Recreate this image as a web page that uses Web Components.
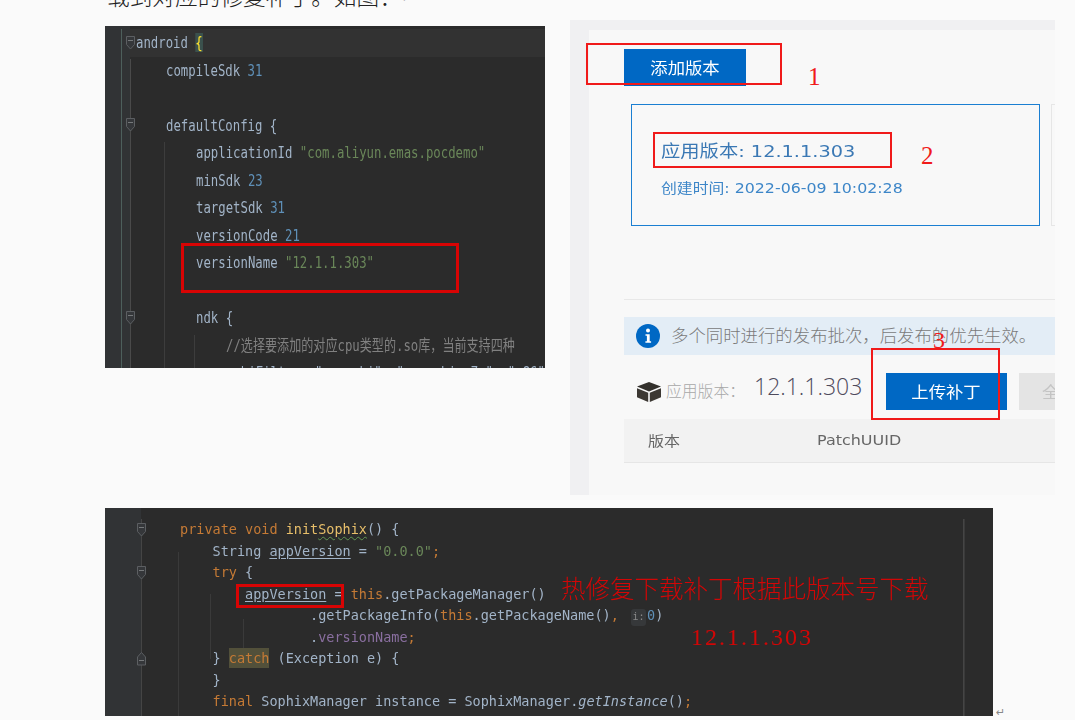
<!DOCTYPE html>
<html lang="zh">
<head>
<meta charset="utf-8">
<title>热修复</title>
<style>
  html, body { margin: 0; background: #fafafa; overflow: hidden; height: 720px; }
</style>
</head>
<body>
<doc-page>
  <span slot="intro">载到对应的修复补丁。如图&#xFF1A;</span>
  <code-panel slot="left" variant="gradle">
    <mark-box x="76" y="217" w="278" h="50"></mark-box>
  </code-panel>
  <console-panel slot="right"></console-panel>
  <code-panel slot="bottom" variant="java">
    <mark-box x="131" y="76" w="108" h="24"></mark-box>
    <note-text x="456" y="66" size="24.5" cjk>热修复下载补丁根据此版本号下载</note-text>
    <note-text x="586" y="115" size="24" wide>12.1.1.303</note-text>
  </code-panel>
</doc-page>

<script>
const GRADLE_LINES = [
  { indent: 0, fold: 'down', active: true, html: '<i class="id">android</i> <b class="match">{</b>' },
  { indent: 1, html: '<i class="id">compileSdk</i> <i class="num">31</i>' },
  { indent: 0, html: '' },
  { indent: 1, fold: 'down', html: '<i class="id">defaultConfig {</i>' },
  { indent: 2, html: '<i class="id">applicationId</i> <i class="str">"com.aliyun.emas.pocdemo"</i>' },
  { indent: 2, html: '<i class="id">minSdk</i> <i class="num">23</i>' },
  { indent: 2, html: '<i class="id">targetSdk</i> <i class="num">31</i>' },
  { indent: 2, html: '<i class="id">versionCode</i> <i class="num">21</i>' },
  { indent: 2, html: '<i class="id">versionName</i> <i class="str">"12.1.1.303"</i>' },
  { indent: 0, html: '' },
  { indent: 2, fold: 'down', html: '<i class="id">ndk {</i>' },
  { indent: 3, html: '<i class="com">//<span class="han">选择要添加的对应</span>cpu<span class="han">类型的</span>.so<span class="han">库&#xFF0C;当前支持四种</span></i>' },
  { indent: 3, html: '<i class="id">&nbsp;abiFilters "armeabi", "armeabi-v7a", "x86"</i>' }
];

const JAVA_LINES = [
  { indent: 0, fold: 'down', html: '<i class="kw">private void</i> <i class="fn">init<u class="wavy">Sophix</u></i><i class="id">() {</i>' },
  { indent: 1, html: '<i class="id">String <u>appVersion</u> = </i><i class="str">"0.0.0"</i><i class="kw">;</i>' },
  { indent: 1, fold: 'down', html: '<i class="kw">try</i> <i class="id">{</i>' },
  { indent: 2, html: '<i class="id"><u>appVersion</u> = </i><i class="kw">this</i><i class="id">.getPackageManager()</i>' },
  { indent: 4, html: '<i class="id">.getPackageInfo(</i><i class="kw">this</i><i class="id">.getPackageName()</i><i class="kw">,</i> <span class="hint">i:</span><i class="num">0</i><i class="id">)</i>' },
  { indent: 4, html: '<i class="id">.</i><i class="field">versionName</i><i class="kw">;</i>' },
  { indent: 1, fold: 'up', html: '<i class="id">}</i> <i class="kw catch">catch</i> <i class="id">(Exception e) {</i>' },
  { indent: 1, html: '<i class="id">}</i>' },
  { indent: 1, html: '<i class="kw">final</i> <i class="id">SophixManager instance = SophixManager.</i><em class="id">getInstance</em><i class="id">()</i><i class="kw">;</i>' }
];

const EDITORS = {
  gradle: {
    lines: GRADLE_LINES, width: 440, height: 342, gutter: 25, pad: 31, tab: 30, lineHeight: 27.5, top: 3,
    font: 16, squeeze: 0.77, foldX: 21, markWidth: 3,
    guides: [[16, 0, 342, '#4d5f5c'], [25, 30, 312, '#4a4a4a'], [59, 113, 229, '#3d3d3d'], [89, 306, 36, '#3d3d3d']]
  },
  java: {
    lines: JAVA_LINES, width: 888, height: 208, gutter: 36, pad: 75, tab: 32.5, lineHeight: 21.5, top: 11,
    font: 13.5, squeeze: 1, foldX: 32, markWidth: 3,
    guides: [[36, 0, 208, '#454545'], [73, 33, 175, '#3a3a3a'], [105, 75, 65, '#3a3a3a'], [138, 100, 40, '#3a3a3a'], [858, 0, 208, '#454545'], [859, 0, 208, '#3a3a3a']]
  }
};

class DocPage extends HTMLElement {
  constructor() {
    super();
    this.attachShadow({ mode: 'open' });
    this.shadowRoot.innerHTML = `
      <style>
        :host { display: block; padding-left: 105px; width: 1075px; box-sizing: border-box; }
        .intro {
          display: flex; align-items: center; height: 24px; margin-top: -16px; padding-left: 2px;
          font: 300 22.7px/24px "Noto Sans CJK SC", sans-serif; color: #222; white-space: nowrap;
        }
        .ret { color: #aaa; font: 11px "DejaVu Sans", sans-serif; margin-top: 4px; }
        .row { display: flex; align-items: flex-start; gap: 25px; margin-top: 12px; }
        .left { display: block; margin-top: 6px; }
        .bottom { display: flex; align-items: flex-end; margin-top: 13px; }
        .end { color: #888; font: 11px "DejaVu Sans", sans-serif; margin: 0 0 -3px 3px; }
      </style>
      <div class="intro"><slot name="intro"></slot><span class="ret">↵</span></div>
      <div class="row">
        <div class="left"><slot name="left"></slot></div>
        <slot name="right"></slot>
      </div>
      <div class="bottom"><slot name="bottom"></slot><span class="end">↵</span></div>
    `;
  }
}

class CodePanel extends HTMLElement {
  constructor() {
    super();
    this.attachShadow({ mode: 'open' });
  }

  connectedCallback() {
    const cfg = EDITORS[this.getAttribute('variant')];
    this.shadowRoot.innerHTML = `
      <style>
        :host {
          display: block; position: relative; overflow: hidden; box-sizing: border-box; flex: none;
          width: ${cfg.width}px; height: ${cfg.height}px; padding-top: ${cfg.top}px;
          background: linear-gradient(90deg, #313335 ${cfg.gutter}px, #2b2b2b ${cfg.gutter}px);
          font: ${cfg.font}px/${cfg.lineHeight}px "DejaVu Sans Mono", "Noto Sans CJK SC", monospace;
          --mark-width: ${cfg.markWidth}px;
        }
        .code { filter: blur(.3px); }
        .line { position: relative; height: ${cfg.lineHeight}px; white-space: pre; }
        .line.active { background: linear-gradient(90deg, transparent 25px, #323232 25px); }
        .text { display: inline-block; transform: scaleX(${cfg.squeeze}); transform-origin: 0 50%; }
        .guide { position: absolute; width: 1px; }
        .fold { position: absolute; left: ${cfg.foldX}px; top: 50%; margin-top: -7px; }
        i, em { font-style: normal; }
        em { font-style: italic; }
        b { font-weight: 400; }
        .id { color: #a2b4c8; }
        .num { color: #5f90b8; }
        .str { color: #6a8759; }
        .kw { color: #c57a35; }
        .fn { color: #e8bf6a; }
        .field { color: #8a6fa0; }
        .com { color: #808080; }
        .han { font-size: 15.7px; }
        .match { color: #ffe22e; background: #3b514d; }
        .catch { background: #52503a; padding: 2px 0; }
        u { text-underline-offset: 2px; }
        .wavy { text-decoration: underline wavy #619654 1px; }
        .hint {
          display: inline-block; width: 15px; height: 17px; margin: 0 1px 0 4px; border-radius: 3px;
          background: #36383a; color: #8a8a8a; font-size: 10px; line-height: 16px; text-align: center;
        }
      </style>
      <div class="code"></div>
      <slot></slot>
    `;
    const code = this.shadowRoot.querySelector('.code');
    cfg.guides.forEach(([x, y, h, color]) => {
      const guide = document.createElement('div');
      guide.className = 'guide';
      guide.style.cssText = `left:${x}px;top:${y}px;height:${h}px;background:${color}`;
      code.appendChild(guide);
    });
    cfg.lines.forEach(line => {
      const row = document.createElement('div');
      row.className = line.active ? 'line active' : 'line';
      row.style.paddingLeft = `${cfg.pad + line.indent * cfg.tab}px`;
      row.innerHTML = `<span class="text">${line.html}</span>`;
      if (line.fold) row.insertAdjacentHTML('beforeend', CodePanel.foldIcon(line.fold));
      code.appendChild(row);
    });
  }

  // Small shield marker shown in the editor gutter
  static foldIcon(dir) {
    const path = dir === 'down'
      ? 'M.5 .5h8v8l-4 4.5-4-4.5z'
      : 'M.5 13v-8l4-4.5 4 4.5v8z';
    const y = dir === 'down' ? 4.5 : 8.5;
    return `<svg class="fold" width="9" height="14" viewBox="0 0 9 14"><path d="${path}" fill="#35373a" stroke="#5c5f62"/><path d="M2 ${y}h5" stroke="#75787a"/></svg>`;
  }
}

class MarkBox extends HTMLElement {
  constructor() {
    super();
    this.attachShadow({ mode: 'open' }).innerHTML = `
      <style>
        :host {
          display: block; position: absolute; box-sizing: border-box;
          border: var(--mark-width, 2px) solid var(--mark, #d80404);
        }
      </style>`;
  }

  connectedCallback() {
    this.style.left = this.getAttribute('x') + 'px';
    this.style.top = this.getAttribute('y') + 'px';
    this.style.width = this.getAttribute('w') + 'px';
    this.style.height = this.getAttribute('h') + 'px';
  }
}

class NoteText extends HTMLElement {
  constructor() {
    super();
    this.attachShadow({ mode: 'open' }).innerHTML = `
      <style>
        :host {
          display: block; position: absolute; white-space: nowrap;
          color: var(--note, #d20606); line-height: 28px;
          font-family: "Liberation Serif", "Noto Sans CJK SC", serif; font-weight: 400;
        }
        :host([cjk]) { font-family: "Noto Sans CJK SC", sans-serif; font-weight: 300; }
        :host([wide]) { letter-spacing: 2px; }
      </style>
      <slot></slot>`;
  }

  connectedCallback() {
    this.style.left = this.getAttribute('x') + 'px';
    this.style.top = this.getAttribute('y') + 'px';
    this.style.fontSize = this.getAttribute('size') + 'px';
  }
}

class ConsoleButton extends HTMLElement {
  constructor() {
    super();
    this.attachShadow({ mode: 'open' }).innerHTML = `
      <style>
        :host {
          display: flex; align-items: center; justify-content: center; flex: none; box-sizing: border-box;
          width: 122px; height: 37px; background: #0068c4; color: #fff;
          font: 400 15.5px "Noto Sans CJK SC", sans-serif;
        }
        :host([muted]) {
          width: 60px; justify-content: flex-start; padding-left: 24px; background: #e4e4e4; color: #c4c4c4;
        }
        .t { display: inline-block; transform: scaleX(1.12); margin-top: -1px; }
      </style>
      <span class="t"><slot></slot></span>`;
  }
}

class VersionCard extends HTMLElement {
  constructor() {
    super();
    this.attachShadow({ mode: 'open' }).innerHTML = `
      <style>
        :host {
          display: block; flex: none; box-sizing: border-box; width: 409px; height: 122px;
          margin-left: 7px; padding: 32px 0 0 29px; border: 1.5px solid #1b7fd2;
        }
        .name, .time { transform-origin: 0 50%; white-space: nowrap; }
        .name { font: 400 16.5px/30px "DejaVu Sans", "Noto Sans CJK SC", sans-serif; color: #3a78b4; transform: scaleX(1.17); }
        .time { margin-top: 12px; font: 400 13.2px/20px "DejaVu Sans", "Noto Sans CJK SC", sans-serif; color: #3d86c8; transform: scaleX(1.2); }
      </style>
      <div class="name">应用版本: 12.1.1.303</div>
      <div class="time">创建时间: 2022-06-09 10:02:28</div>`;
  }
}

class NoticeBar extends HTMLElement {
  constructor() {
    super();
    this.attachShadow({ mode: 'open' }).innerHTML = `
      <style>
        :host {
          display: flex; align-items: center; gap: 11px; height: 38px; box-sizing: border-box; padding-left: 12px;
          background: #e3edf6; color: #7a7a7a; white-space: nowrap;
          font: 300 17.4px "Noto Sans CJK SC", sans-serif;
        }
        svg { flex: none; }
        .t { margin-top: -3px; }
      </style>
      <svg width="24" height="24" viewBox="0 0 24 24">
        <circle cx="12" cy="12" r="12" fill="#0068c4"/>
        <circle cx="12" cy="6.6" r="2" fill="#fff"/>
        <path d="M9.5 10.2h4.2v7h1.4v1.6H9.4v-1.6h1.5v-5.4H9.5z" fill="#fff"/>
      </svg>
      <span class="t"><slot></slot></span>`;
  }
}

class ConsolePanel extends HTMLElement {
  constructor() {
    super();
    this.attachShadow({ mode: 'open' }).innerHTML = `
      <style>
        :host {
          display: block; position: relative; flex: none; box-sizing: border-box; overflow: hidden;
          width: 485px; height: 475px; padding: 10px 0 0 19px; background: #f0f0f2;
          --mark: #f01a1a; --note: #f01a1a;
        }
        .inner { height: 465px; padding-left: 35px; padding-top: 19px; box-sizing: border-box; background: #f8f8f8; overflow: hidden; }
        .cards { display: flex; gap: 11px; margin-top: 18px; }
        .ghost { flex: none; width: 60px; height: 122px; box-sizing: border-box; border: 1px solid #e6e6e6; }
        .rule { height: 1px; margin-top: 73px; background: #e8e8e8; }
        notice-bar { margin-top: 17px; }
        .head { display: flex; align-items: center; margin-top: 18px; white-space: nowrap; }
        .head > * { flex: none; }
        .head svg { margin: 0 4px 0 12px; }
        .label { font: 300 15.8px "Noto Sans CJK SC", sans-serif; color: #a8a8a8; width: 88px; margin-top: -3px; }
        .ver { font: 300 23px "Open Sans", sans-serif; color: #4e4a5c; width: 132px; margin-top: -12px; }
        .head console-button { width: 121px; }
        .head console-button[muted] { width: 60px; margin-left: 12px; }
        .thead {
          display: flex; align-items: center; height: 44px; box-sizing: border-box; margin-top: 9px; padding-left: 24px;
          background: #f2f2f2; border-bottom: 1px solid #e6e6e6; color: #666;
          font: 400 14px "DejaVu Sans", "Noto Sans CJK SC", sans-serif;
        }
        .thead span { transform: scaleX(1.14); transform-origin: 0 50%; margin-top: -2px; }
        .thead span:first-child { width: 169px; }
      </style>
      <div class="inner">
        <console-button>添加版本</console-button>
        <div class="cards"><version-card></version-card><div class="ghost"></div></div>
        <div class="rule"></div>
        <notice-bar>多个同时进行的发布批次&#xFF0C;后发布的优先生效。</notice-bar>
        <div class="head">
          <svg width="26" height="20" viewBox="0 0 26 20">
            <path d="M13 0l12 4.6-12 4.8L1 4.6z" fill="#33302c"/>
            <path d="M1 6.2l11.2 4.5V20L1 15.2z" fill="#3c3833"/>
            <path d="M25 6.2l-11.2 4.5V20L25 15.2z" fill="#3c3833"/>
          </svg>
          <span class="label">应用版本&#xFF1A;</span>
          <span class="ver">12.1.1.303</span>
          <console-button>上传补丁</console-button>
          <console-button muted>全</console-button>
        </div>
        <div class="thead"><span>版本</span><span>PatchUUID</span></div>
      </div>
      <mark-box x="16" y="23" w="196" h="42"></mark-box>
      <note-text x="238" y="43" size="25">1</note-text>
      <mark-box x="83" y="112" w="239" h="36"></mark-box>
      <note-text x="351" y="122" size="25">2</note-text>
      <mark-box x="301" y="328" w="129" h="72"></mark-box>
      <note-text x="363" y="306" size="24">3</note-text>`;
  }
}

customElements.define('doc-page', DocPage);
customElements.define('code-panel', CodePanel);
customElements.define('mark-box', MarkBox);
customElements.define('note-text', NoteText);
customElements.define('console-button', ConsoleButton);
customElements.define('version-card', VersionCard);
customElements.define('notice-bar', NoticeBar);
customElements.define('console-panel', ConsolePanel);
</script>
</body>
</html>
